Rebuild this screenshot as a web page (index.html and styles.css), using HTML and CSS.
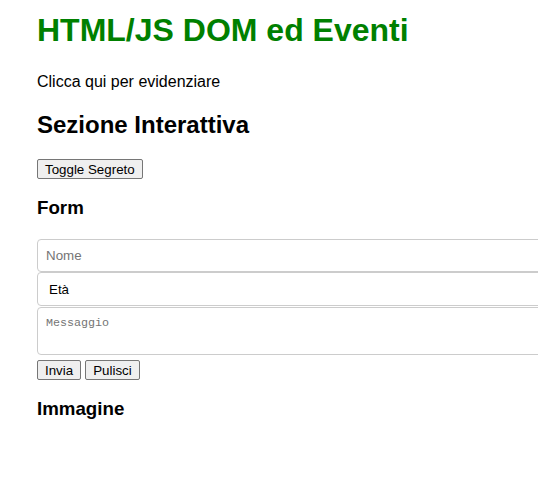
FILE: index.html
```html
<!DOCTYPE html>
<html lang="it">
<head>
<meta charset="utf-8">
<title>HTML/JS DOM ed Eventi</title>
<link rel="stylesheet" href="styles.css">
</head>
<body>
<h1 class="title">HTML/JS DOM ed Eventi</h1>
<p class="highlight">Clicca qui per evidenziare</p>
<h2 class="section">Sezione Interattiva</h2>
<div class="toggle-row"><button class="btn">Toggle Segreto</button></div>
<h3 class="sub form-title">Form</h3>
<form class="form">
  <input class="field" type="text" placeholder="Nome">
  <select class="field select"><option>Età</option></select>
  <textarea class="field area" rows="2" placeholder="Messaggio"></textarea>
  <div class="actions"><button class="btn" type="button">Invia</button> <button class="btn" type="button">Pulisci</button></div>
</form>
<h3 class="sub">Immagine</h3>
</body>
</html>
```
FILE: styles.css
```css
html, body {
  overflow: hidden;
}
body {
  margin: 0;
  padding: 0 0 0 37px;
  font-family: "Liberation Sans", Arial, sans-serif;
  color: #000;
  background: #fff;
}
.title {
  color: #008000;
  font-size: 32px;
  margin: 12px 0 21px;
}
.highlight {
  font-size: 16px;
  margin: 24px 0 18px;
}
.section {
  font-size: 24px;
  margin: 20px 0 20px;
}
.btn {
  font-family: "Liberation Sans", Arial, sans-serif;
  font-size: 13.33px;
  padding: 2px 7px 1px;
  background: #efefef;
  border: 1px solid #767676;
  border-radius: 2px;
  color: #000;
}
.sub {
  font-size: 18.72px;
  margin: 18px 0 18px;
}
.form-title {
  margin-bottom: 20px;
}
.form {
  width: 540px;
}
.field {
  display: block;
  box-sizing: border-box;
  width: 100%;
  margin: 0;
  padding: 8px;
  border: 1px solid #ccc;
  border-radius: 4px;
  font-family: "Liberation Sans", Arial, sans-serif;
  font-size: 13.33px;
  background: #fff;
  color: #000;
}
.field::placeholder {
  color: #757575;
}
.select {
  appearance: none;
  height: 34px;
  padding-left: 11px;
}
.area {
  font-family: "Liberation Mono", "DejaVu Sans Mono", monospace;
  font-size: 11.7px;
  height: 48px;
  resize: none;
  margin-top: 1px;
  margin-bottom: 5px;
}
.actions {
  display: flex;
  gap: 4px;
}
```
